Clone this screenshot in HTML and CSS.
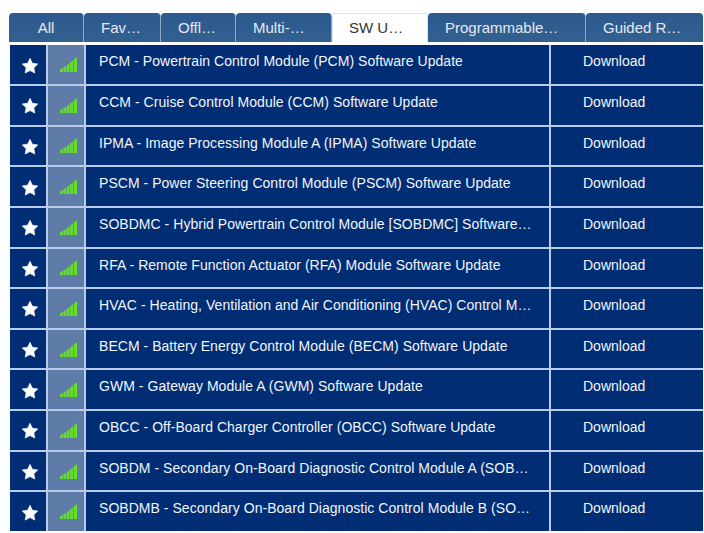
FILE: index.html
```html
<!DOCTYPE html>
<html lang="en">
<head>
    <meta charset="UTF-8">
    <title>Software Updates</title>
    <link rel="stylesheet" href="styles.css">
</head>
<body>
    <svg class="defs" width="0" height="0">
        <symbol id="star" viewBox="0 0 16 16">
            <path d="M8 1.2l2.100 4.300 4.800.7-3.500 3.300.9 4.800L8 12l-4.300 2.300.9-4.800L1.100 6.200l4.800-.7z"/>
        </symbol>
        <symbol id="signal" viewBox="0 0 17 15">
            <path d="M0 12.400l2.800-1.600V15H0zM3.400 10.400l2.800-1.700V15H3.400zM6.800 8.200l2.800-2.100V15H6.800zM10.200 5.600l2.900-2.300V15h-2.900zM13.800 2.800L17 0v15h-3.200z"/>
        </symbol>
    </svg>

    <div class="tabs">
        <div class="tab tab-all">All</div>
        <div class="tab tab-fav">Fav…</div>
        <div class="tab tab-off">Offl…</div>
        <div class="tab tab-multi">Multi-…</div>
        <div class="tab tab-sw active">SW U…</div>
        <div class="tab tab-prog">Programmable…</div>
        <div class="tab tab-guided">Guided R…</div>
    </div>

    <div class="list">
        <div class="row">
            <div class="cell cell-star"><svg class="star"><use href="#star"/></svg></div>
            <div class="cell cell-signal"><svg class="signal"><use href="#signal"/></svg></div>
            <div class="cell cell-name">PCM - Powertrain Control Module (PCM) Software Update</div>
            <div class="cell cell-action">Download</div>
        </div>
        <div class="row">
            <div class="cell cell-star"><svg class="star"><use href="#star"/></svg></div>
            <div class="cell cell-signal"><svg class="signal"><use href="#signal"/></svg></div>
            <div class="cell cell-name">CCM - Cruise Control Module (CCM) Software Update</div>
            <div class="cell cell-action">Download</div>
        </div>
        <div class="row">
            <div class="cell cell-star"><svg class="star"><use href="#star"/></svg></div>
            <div class="cell cell-signal"><svg class="signal"><use href="#signal"/></svg></div>
            <div class="cell cell-name">IPMA - Image Processing Module A (IPMA) Software Update</div>
            <div class="cell cell-action">Download</div>
        </div>
        <div class="row">
            <div class="cell cell-star"><svg class="star"><use href="#star"/></svg></div>
            <div class="cell cell-signal"><svg class="signal"><use href="#signal"/></svg></div>
            <div class="cell cell-name">PSCM - Power Steering Control Module (PSCM) Software Update</div>
            <div class="cell cell-action">Download</div>
        </div>
        <div class="row">
            <div class="cell cell-star"><svg class="star"><use href="#star"/></svg></div>
            <div class="cell cell-signal"><svg class="signal"><use href="#signal"/></svg></div>
            <div class="cell cell-name">SOBDMC - Hybrid Powertrain Control Module [SOBDMC] Software…</div>
            <div class="cell cell-action">Download</div>
        </div>
        <div class="row">
            <div class="cell cell-star"><svg class="star"><use href="#star"/></svg></div>
            <div class="cell cell-signal"><svg class="signal"><use href="#signal"/></svg></div>
            <div class="cell cell-name">RFA - Remote Function Actuator (RFA) Module Software Update</div>
            <div class="cell cell-action">Download</div>
        </div>
        <div class="row">
            <div class="cell cell-star"><svg class="star"><use href="#star"/></svg></div>
            <div class="cell cell-signal"><svg class="signal"><use href="#signal"/></svg></div>
            <div class="cell cell-name">HVAC - Heating, Ventilation and Air Conditioning (HVAC) Control M…</div>
            <div class="cell cell-action">Download</div>
        </div>
        <div class="row">
            <div class="cell cell-star"><svg class="star"><use href="#star"/></svg></div>
            <div class="cell cell-signal"><svg class="signal"><use href="#signal"/></svg></div>
            <div class="cell cell-name">BECM - Battery Energy Control Module (BECM) Software Update</div>
            <div class="cell cell-action">Download</div>
        </div>
        <div class="row">
            <div class="cell cell-star"><svg class="star"><use href="#star"/></svg></div>
            <div class="cell cell-signal"><svg class="signal"><use href="#signal"/></svg></div>
            <div class="cell cell-name">GWM - Gateway Module A (GWM) Software Update</div>
            <div class="cell cell-action">Download</div>
        </div>
        <div class="row">
            <div class="cell cell-star"><svg class="star"><use href="#star"/></svg></div>
            <div class="cell cell-signal"><svg class="signal"><use href="#signal"/></svg></div>
            <div class="cell cell-name">OBCC - Off-Board Charger Controller (OBCC) Software Update</div>
            <div class="cell cell-action">Download</div>
        </div>
        <div class="row">
            <div class="cell cell-star"><svg class="star"><use href="#star"/></svg></div>
            <div class="cell cell-signal"><svg class="signal"><use href="#signal"/></svg></div>
            <div class="cell cell-name">SOBDM - Secondary On-Board Diagnostic Control Module A (SOB…</div>
            <div class="cell cell-action">Download</div>
        </div>
        <div class="row">
            <div class="cell cell-star"><svg class="star"><use href="#star"/></svg></div>
            <div class="cell cell-signal"><svg class="signal"><use href="#signal"/></svg></div>
            <div class="cell cell-name">SOBDMB - Secondary On-Board Diagnostic Control Module B (SO…</div>
            <div class="cell cell-action">Download</div>
        </div>
    </div>
</body>
</html>
```

FILE: styles.css
```css
body {
    margin: 0;
    padding: 13px 1px 0 9px;
    background: #fff;
    font-family: "Liberation Sans", Arial, sans-serif;
}

.defs {
    position: absolute;
}

.tabs {
    display: flex;
    height: 29px;
    margin-bottom: 3.3px;
}

.tab {
    box-sizing: border-box;
    padding-left: 17px;
    background: linear-gradient(#2b5a90, #34608f);
    border-right: 1px solid #8ea9c9;
    color: #e4eaf2;
    font-size: 15px;
    line-height: 30px;
    border-radius: 4px 4px 0 0;
    white-space: nowrap;
}

.tab-all {
    width: 75px;
    padding-left: 0;
    text-align: center;
}
.tab-fav { width: 77px; }
.tab-off { width: 75px; }
.tab-multi { width: 96px; }
.tab-sw { width: 96px; }
.tab-prog { width: 158px; }
.tab-guided { flex: 1; border-right: none; }

.tab.active {
    background: #fff;
    color: #333;
    border: 1px solid #dfe4ea;
    border-bottom: none;
    padding-left: 16px;
    line-height: 28px;
}

.list {
    display: grid;
    grid-template-rows: repeat(12, 38.65px);
    gap: 2px;
    margin-left: 1px;
    background: #b9cdea;
}

.row {
    display: grid;
    grid-template-columns: 36px 36px 463px 1fr;
    column-gap: 2px;
}

.cell {
    background: #002d73;
    color: #f2f5fa;
    font-size: 14px;
    white-space: nowrap;
}

.cell-star, .cell-signal {
    display: flex;
    align-items: center;
    justify-content: center;
}

.cell-star {
    padding: 2px 0 0 3px;
    box-sizing: border-box;
}

.cell-signal {
    background: #5f7ba8;
    padding: 0 0 0 5px;
    box-sizing: border-box;
}

.star {
    width: 18px;
    height: 18px;
    fill: #fff;
    stroke: #fff;
    stroke-width: .6;
    stroke-linejoin: round;
}

.signal {
    width: 17px;
    height: 15px;
    fill: #66dd2a;
}

.cell-name {
    padding: 8px 0 0 13px;
    line-height: 16px;
    letter-spacing: .04px;
}

.cell-action {
    padding: 8px 0 0 32px;
    line-height: 16px;
}
```
